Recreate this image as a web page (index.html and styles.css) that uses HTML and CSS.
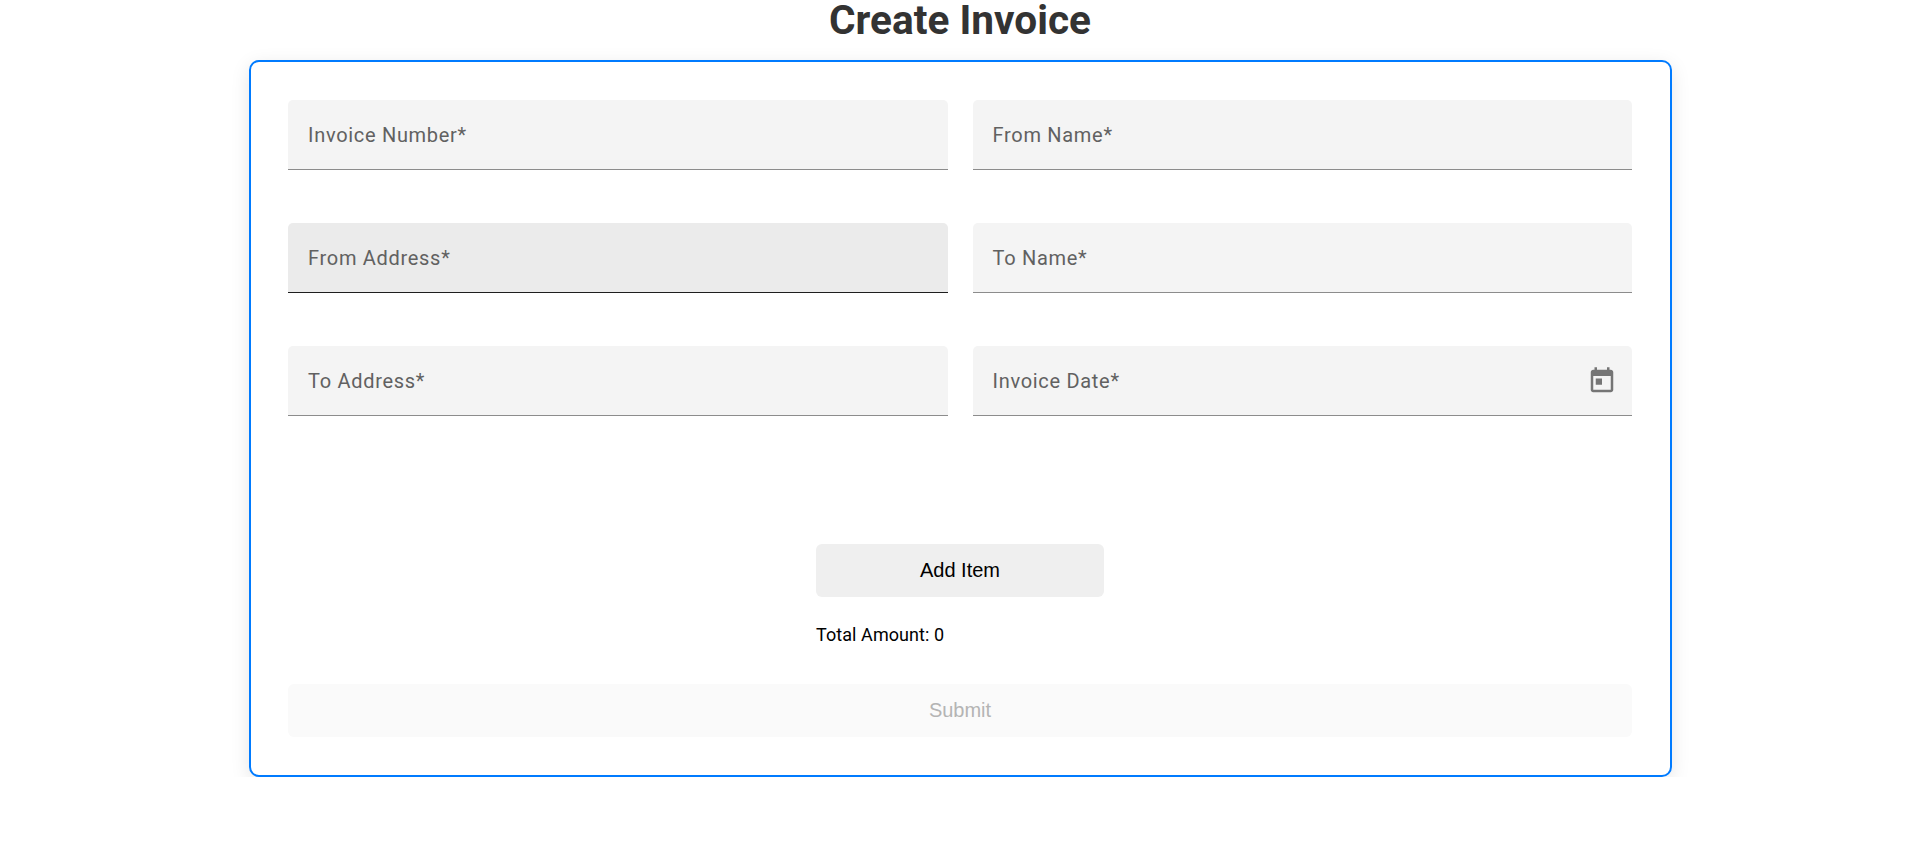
FILE: index.html
```html
<!DOCTYPE html>
<html lang="en">
<head>
<meta charset="utf-8">
<title>Create Invoice</title>
<link rel="stylesheet" href="styles.css">
</head>
<body>
<h1 class="title">Create Invoice</h1>
<form class="invoice">
  <div class="fields">
    <div class="field"><label>Invoice Number*</label></div>
    <div class="field"><label>From Name*</label></div>
    <div class="field field-hover"><label>From Address*</label></div>
    <div class="field"><label>To Name*</label></div>
    <div class="field"><label>To Address*</label></div>
    <div class="field"><label>Invoice Date*</label>
      <svg class="calendar" viewBox="0 0 24 24"><path d="M19 3h-1V1h-2v2H8V1H6v2H5c-1.11 0-1.99.9-1.99 2L3 19c0 1.1.89 2 2 2h14c1.1 0 2-.9 2-2V5c0-1.1-.9-2-2-2zm0 16H5V8h14v11zM7 10h5v5H7z"/></svg>
    </div>
  </div>
  <div class="items">
    <button class="button" type="button">Add Item</button>
    <div class="total">Total Amount: 0</div>
  </div>
  <button class="button submit" type="submit" disabled>Submit</button>
</form>
</body>
</html>
```
FILE: styles.css
```css
* { box-sizing: border-box; }
body { margin: 0; background: #fff; font-family: Roboto, sans-serif; }
.title { margin: 0; height: 60px; line-height: 41px; font-size: 40.6px; font-weight: 700; text-align: center; color: #333; }
.invoice { width: 1423px; height: 717px; margin: 0 auto; padding: 38px 37.5px; border: 2px solid #007bff; border-radius: 10px; box-shadow: 0 5px 19px rgba(0,0,0,.1); }
.fields { display: grid; grid-template-columns: 1fr 1fr; column-gap: 25px; row-gap: 53px; }
.field { display: flex; align-items: center; justify-content: space-between; height: 70px; padding: 0 15px 0 20px; background: #f4f4f4; border-bottom: 1px solid #8c8c8c; border-radius: 5px 5px 0 0; color: #616161; font-size: 20px; letter-spacing: .7px; }
.field-hover { background: #ebebeb; border-bottom-color: #1e1e1e; }
.calendar { width: 30px; height: 30px; fill: #757575; }
.items { width: 288px; margin: 128px auto 0; }
.button { display: block; width: 100%; height: 53px; border: 0; border-radius: 6px; background: #efefef; color: #000; font: 20px "Liberation Sans", sans-serif; }
.total { margin: 25px 0 36px; line-height: 26px; font-size: 18px; letter-spacing: .07px; }
.submit { background: #fafafa; color: #b4b4b4; }
```
